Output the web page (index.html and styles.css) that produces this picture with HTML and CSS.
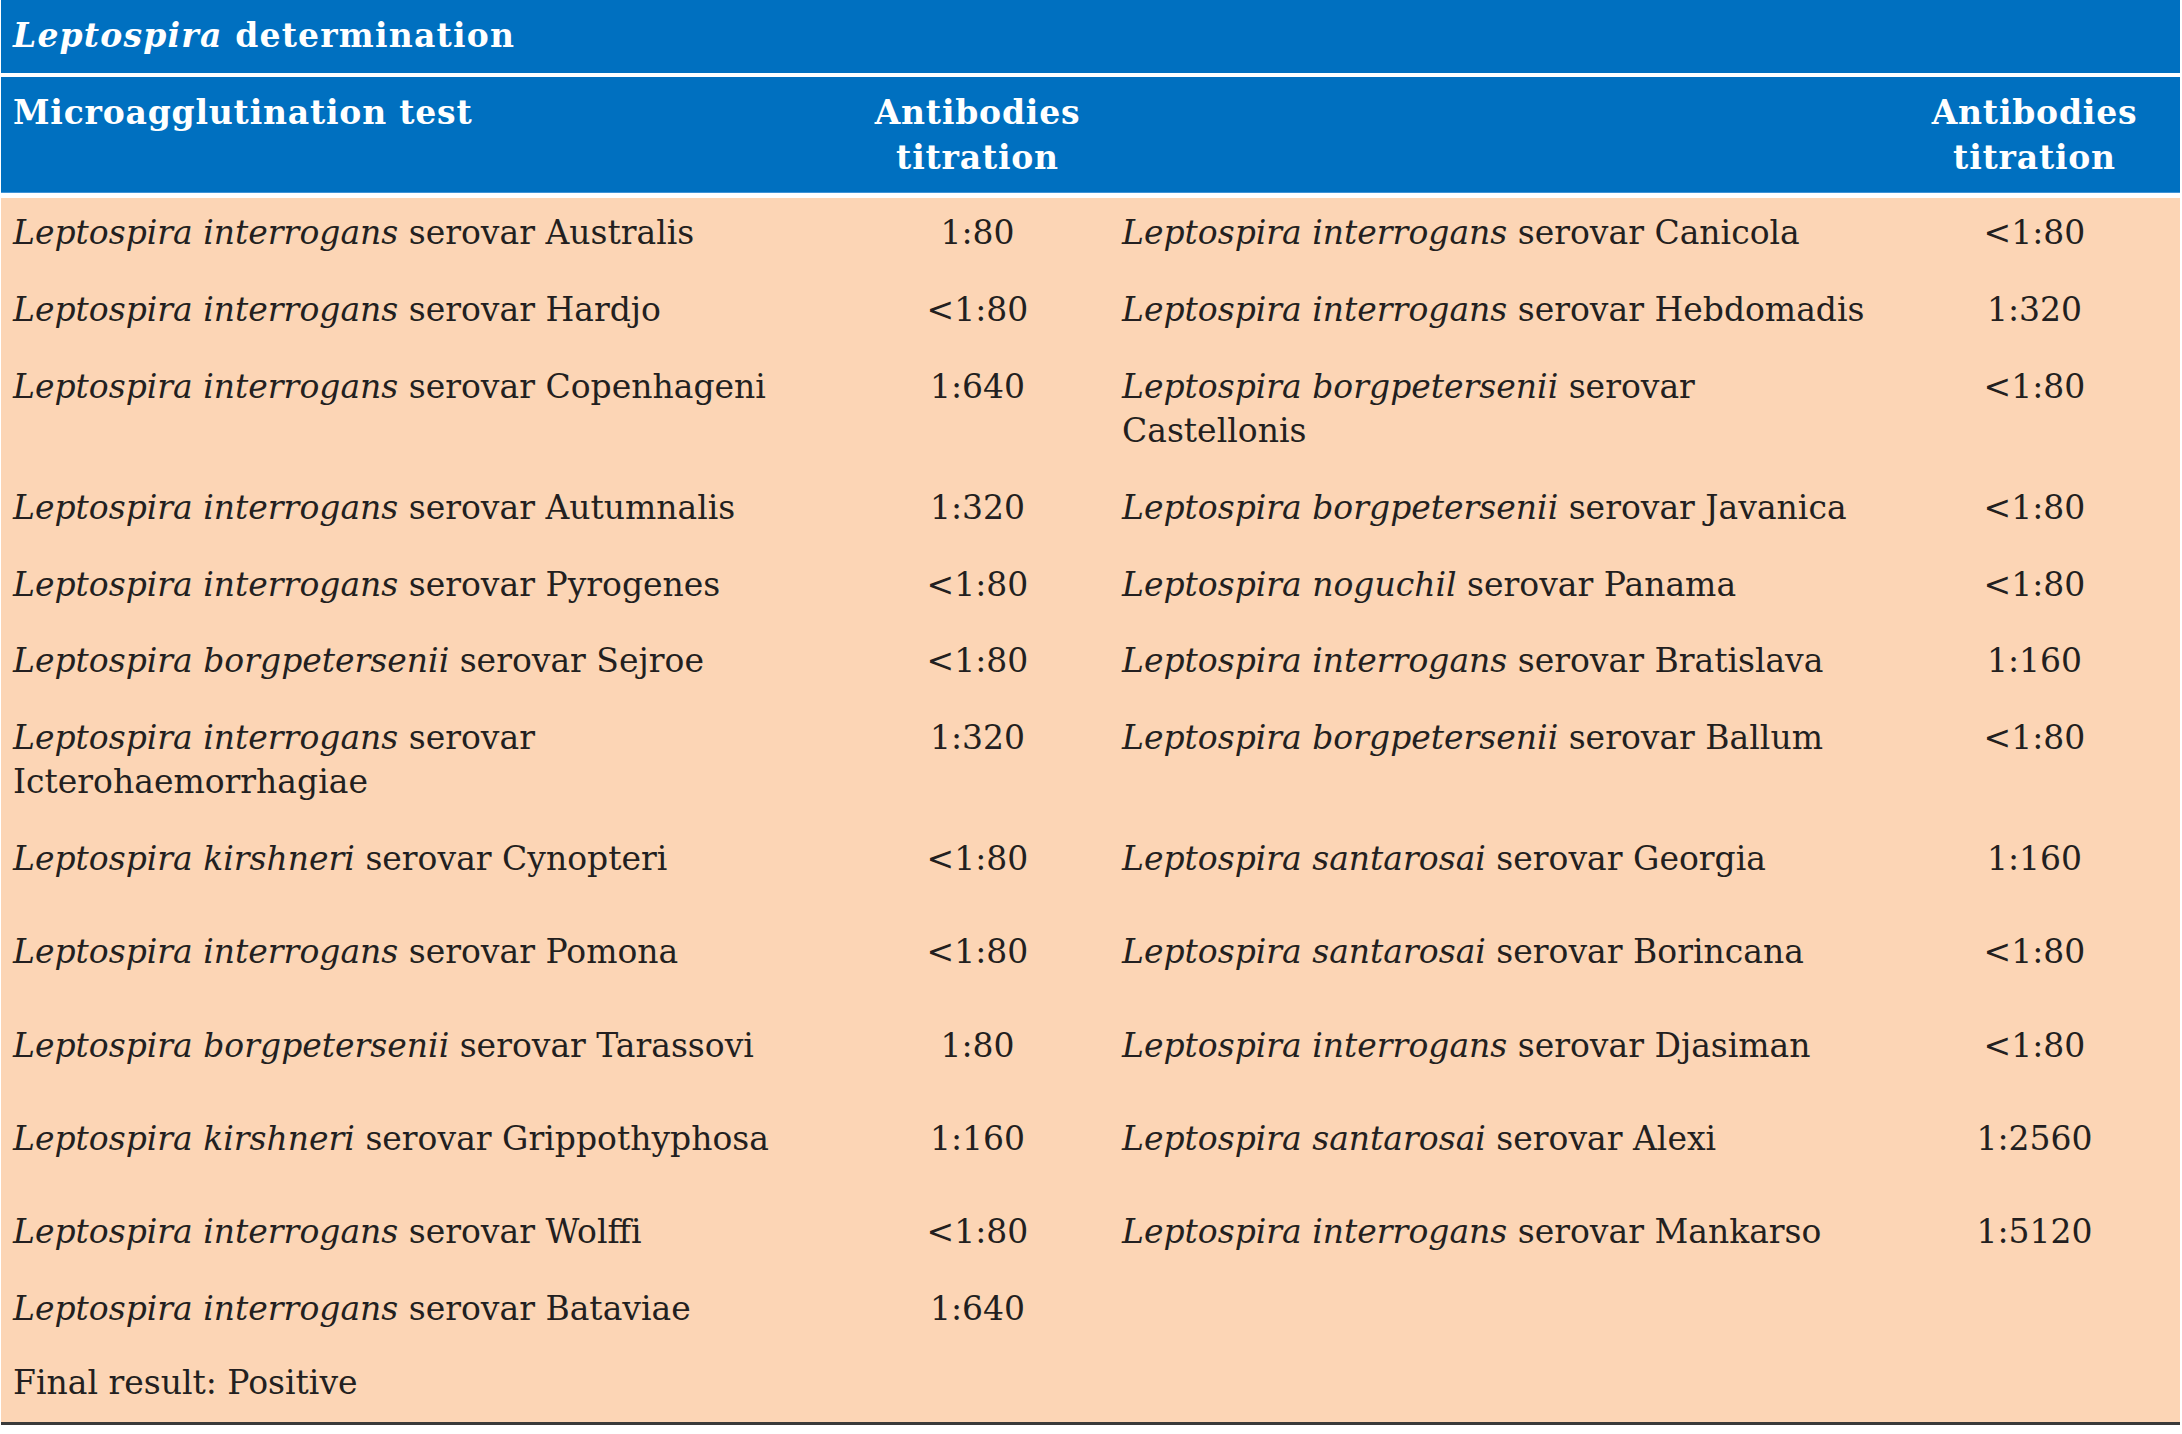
FILE: index.html
```html
<!DOCTYPE html>
<html lang="en">
<head>
<meta charset="utf-8">
<title>Leptospira determination</title>
<link rel="stylesheet" href="styles.css">
</head>
<body>
<div class="panel">
  <div class="title"><i>Leptospira</i> determination</div>
  <table class="mat">
    <colgroup>
      <col class="c-name1">
      <col class="c-val">
      <col class="c-name2">
      <col class="c-val2">
    </colgroup>
    <thead>
      <tr>
        <th class="name">Microagglutination test</th>
        <th class="val">Antibodies<br>titration</th>
        <th class="name"></th>
        <th class="val">Antibodies<br>titration</th>
      </tr>
    </thead>
    <tbody>
      <tr>
        <td class="name"><i>Leptospira interrogans</i> serovar Australis</td>
        <td class="val">1:80</td>
        <td class="name"><i>Leptospira interrogans</i> serovar Canicola</td>
        <td class="val">&lt;1:80</td>
      </tr>
      <tr>
        <td class="name"><i>Leptospira interrogans</i> serovar Hardjo</td>
        <td class="val">&lt;1:80</td>
        <td class="name"><i>Leptospira interrogans</i> serovar Hebdomadis</td>
        <td class="val">1:320</td>
      </tr>
      <tr>
        <td class="name"><i>Leptospira interrogans</i> serovar Copenhageni</td>
        <td class="val">1:640</td>
        <td class="name"><i>Leptospira borgpetersenii</i> serovar<br>Castellonis</td>
        <td class="val">&lt;1:80</td>
      </tr>
      <tr>
        <td class="name"><i>Leptospira interrogans</i> serovar Autumnalis</td>
        <td class="val">1:320</td>
        <td class="name"><i>Leptospira borgpetersenii</i> serovar Javanica</td>
        <td class="val">&lt;1:80</td>
      </tr>
      <tr>
        <td class="name"><i>Leptospira interrogans</i> serovar Pyrogenes</td>
        <td class="val">&lt;1:80</td>
        <td class="name"><i>Leptospira noguchil</i> serovar Panama</td>
        <td class="val">&lt;1:80</td>
      </tr>
      <tr>
        <td class="name"><i>Leptospira borgpetersenii</i> serovar Sejroe</td>
        <td class="val">&lt;1:80</td>
        <td class="name"><i>Leptospira interrogans</i> serovar Bratislava</td>
        <td class="val">1:160</td>
      </tr>
      <tr>
        <td class="name"><i>Leptospira interrogans</i> serovar<br>Icterohaemorrhagiae</td>
        <td class="val">1:320</td>
        <td class="name"><i>Leptospira borgpetersenii</i> serovar Ballum</td>
        <td class="val">&lt;1:80</td>
      </tr>
      <tr class="tall">
        <td class="name"><i>Leptospira kirshneri</i> serovar Cynopteri</td>
        <td class="val">&lt;1:80</td>
        <td class="name"><i>Leptospira santarosai</i> serovar Georgia</td>
        <td class="val">1:160</td>
      </tr>
      <tr class="tall">
        <td class="name"><i>Leptospira interrogans</i> serovar Pomona</td>
        <td class="val">&lt;1:80</td>
        <td class="name"><i>Leptospira santarosai</i> serovar Borincana</td>
        <td class="val">&lt;1:80</td>
      </tr>
      <tr class="tall">
        <td class="name"><i>Leptospira borgpetersenii</i> serovar Tarassovi</td>
        <td class="val">1:80</td>
        <td class="name"><i>Leptospira interrogans</i> serovar Djasiman</td>
        <td class="val">&lt;1:80</td>
      </tr>
      <tr class="tall">
        <td class="name"><i>Leptospira kirshneri</i> serovar Grippothyphosa</td>
        <td class="val">1:160</td>
        <td class="name"><i>Leptospira santarosai</i> serovar Alexi</td>
        <td class="val">1:2560</td>
      </tr>
      <tr>
        <td class="name"><i>Leptospira interrogans</i> serovar Wolffi</td>
        <td class="val">&lt;1:80</td>
        <td class="name"><i>Leptospira interrogans</i> serovar Mankarso</td>
        <td class="val">1:5120</td>
      </tr>
      <tr>
        <td class="name"><i>Leptospira interrogans</i> serovar Bataviae</td>
        <td class="val">1:640</td>
        <td class="name"></td>
        <td class="val"></td>
      </tr>
      <tr class="final">
        <td class="name" colspan="4">Final result: Positive</td>
      </tr>
    </tbody>
  </table>
</div>
</body>
</html>
```

FILE: styles.css
```css
html, body {
  margin: 0;
  padding: 0;
  background: #ffffff;
}

body {
  font-family: "DejaVu Serif", "Liberation Serif", serif;
  font-size: 33px;
  line-height: 44.5px;
  color: #231f20;
}

.panel {
  width: 2179px;
  margin-left: 1px;
}

.title {
  height: 73px;
  box-sizing: border-box;
  padding: 14px 12px 0;
  margin-bottom: 4px;
  background: #0070c0;
  color: #ffffff;
  font-weight: bold;
  letter-spacing: 1.2px;
}

.mat {
  width: 2179px;
  table-layout: fixed;
  border-collapse: separate;
  border-spacing: 0;
  background: #fcd5b5;
  border-bottom: 3px solid #3a3a3a;
}

.c-name1 { width: 844px; }
.c-val { width: 265px; }
.c-name2 { width: 779px; }
.c-val2 { width: 291px; }

.mat th {
  background: #0070c0;
  color: #ffffff;
  font-weight: bold;
  letter-spacing: 0.8px;
  vertical-align: top;
  padding: 14px 12px 13px;
  border-bottom: 5px solid #ffffff;
  box-shadow: inset 0 -1px 0 #3f93d6;
}

.mat td {
  vertical-align: top;
  padding: 13.3px 12px 18.9px;
}

.mat .name {
  text-align: left;
}

.mat .val {
  text-align: center;
}

.mat tr.tall td {
  padding-bottom: 35.5px;
}

.mat tr.final td {
  padding-top: 11px;
  padding-bottom: 16.5px;
}
```
